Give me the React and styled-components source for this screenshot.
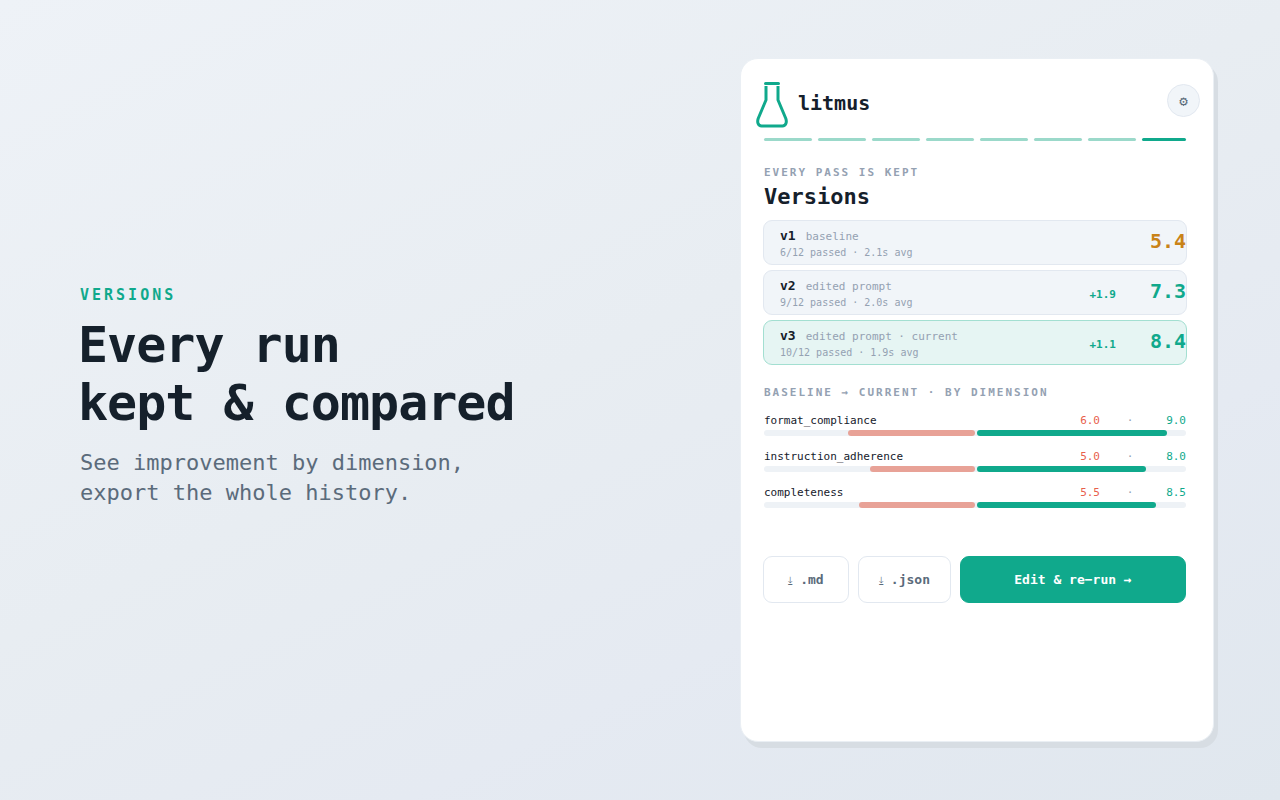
import React from "react";
import styled, { createGlobalStyle } from "styled-components";

const c = {
  ink: "#15202b",
  slate: "#5b6b7b",
  muted: "#94a1b2",
  green: "#10a98c",
  amber: "#c98318",
  red: "#e8604c",
  line: "#e2e8f0",
  panel: "#f1f5f9",
};

const GlobalStyle = createGlobalStyle`
  * { box-sizing: border-box; }
  body {
    margin: 0;
    font-family: "DejaVu Sans Mono", monospace;
    color: ${c.ink};
  }
  h1, h2, h3, p, ul { margin: 0; padding: 0; }
  ul { list-style: none; }
  button { font-family: inherit; cursor: pointer; }
`;

const Page = styled.main`
  min-height: 100vh;
  display: flex;
  align-items: stretch;
  justify-content: space-between;
  padding: 58px 66px 58px 80px;
  background: linear-gradient(154deg, #eef2f7, #e8edf2 45%, #e5eaf2 70%, #e0e7ee);
`;

const Intro = styled.section`
  align-self: center;
  padding-bottom: 6px;
`;

const Kicker = styled.p`
  font-size: 15px;
  line-height: 18px;
  font-weight: 700;
  letter-spacing: 3px;
  color: ${c.green};
`;

const Headline = styled.h1`
  margin: 12px 0 0 -2px;
  font-size: 50px;
  line-height: 58px;
  letter-spacing: -1px;
`;

const Lead = styled.p`
  margin-top: 16px;
  font-size: 22px;
  line-height: 30px;
  color: ${c.slate};
`;

const Card = styled.section`
  width: 474px;
  padding: 22px 27px 23px 23px;
  border: 1px solid #eaeff4;
  border-radius: 18px;
  background: #fff;
  box-shadow: 4px 6px 0 #d7dde3;
`;

const CardHeader = styled.header`
  display: flex;
  align-items: flex-start;
  height: 48px;
  margin: 0 -14px 0 -8px;
`;

const Flask = styled.svg`
  display: block;
  width: 32px;
  height: 48px;
`;

const Brand = styled.span`
  margin: 10px 0 0 10px;
  font-size: 20px;
  line-height: 24px;
  font-weight: 700;
`;

const IconButton = styled.button`
  width: 33px;
  height: 33px;
  margin: 3px 0 0 auto;
  padding: 2px 0 0;
  border: 1px solid ${c.line};
  border-radius: 50%;
  background: ${c.panel};
  font-size: 14px;
  line-height: 29px;
  color: ${c.slate};
`;

const Steps = styled.div`
  display: flex;
  gap: 6px;
  margin-top: 9px;
`;

const Step = styled.span`
  flex: ${(p) => (p.$current ? "11" : "12")} 1 0;
  height: 3px;
  border-radius: 2px;
  background: ${(p) => (p.$current ? c.green : "#9bd9ca")};
`;

const Overline = styled.p`
  margin-top: ${(p) => p.$top};
  font-size: 11px;
  line-height: 14px;
  font-weight: 700;
  letter-spacing: 2px;
  color: ${c.muted};
`;

const Title = styled.h2`
  margin-top: 3px;
  font-size: 22px;
  line-height: 28px;
`;

const VersionList = styled.ul`
  display: grid;
  gap: 5px;
  margin: 9px -1px 0;
`;

const Version = styled.li`
  display: flex;
  height: 45px;
  padding: 6px 0 0 16px;
  border: 1px solid ${(p) => (p.$current ? "#a3dfd1" : c.line)};
  border-radius: 9px;
  background: ${(p) => (p.$current ? "#e6f5f3" : c.panel)};
`;

const VersionText = styled.div`
  flex: 1;
`;

const VersionName = styled.div`
  display: flex;
  align-items: baseline;
  gap: 10px;
  font-size: 11px;
  line-height: 18px;
  color: ${c.muted};

  strong {
    font-size: 13px;
    color: ${c.ink};
  }
`;

const VersionMeta = styled.div`
  font-size: 10px;
  line-height: 14px;
  color: ${c.muted};
`;

const Delta = styled.span`
  padding-top: 11px;
  font-size: 11px;
  line-height: 14px;
  font-weight: 700;
  color: ${c.green};
`;

const Score = styled.span`
  width: 70px;
  text-align: right;
  font-size: 20px;
  line-height: 28px;
  font-weight: 700;
  color: ${(p) => (p.$low ? c.amber : c.green)};
`;

const Dimensions = styled.ul`
  display: grid;
  gap: 14px;
  margin-top: 14px;
`;

const DimensionRow = styled.div`
  display: grid;
  grid-template-columns: 1fr 20px 60px 26px;
  font-size: 11px;
  line-height: 14px;
  margin-bottom: 2px;
`;

const Value = styled.span`
  text-align: ${(p) => p.$align || "right"};
  color: ${(p) => p.$color};
`;

const Track = styled.div`
  display: grid;
  grid-template-columns: 1fr 1fr;
  height: 6px;
  border-radius: 3px;
  background: #eef2f6;
`;

const Fill = styled.span`
  justify-self: ${(p) => (p.$before ? "end" : "start")};
  margin-left: ${(p) => (p.$before ? "0" : "2px")};
  border-radius: 3px;
  background: ${(p) => (p.$before ? "#e8a297" : c.green)};
`;

const Actions = styled.div`
  display: flex;
  gap: 9px;
  margin: 48px 0 0 -1px;
`;

const Button = styled.button`
  flex: ${(p) => (p.$primary ? "1" : "none")};
  width: ${(p) => p.$width || "auto"};
  height: 47px;
  padding: 0;
  border: 1px solid ${(p) => (p.$primary ? c.green : c.line)};
  border-radius: 9px;
  background: ${(p) => (p.$primary ? c.green : "#fff")};
  font-size: 13px;
  font-weight: 700;
  color: ${(p) => (p.$primary ? "#fff" : c.slate)};
`;

const DownloadGlyph = styled.span`
  font-size: 10px;
  font-weight: 400;
`;

const versions = [
  { id: "v1", note: "baseline", meta: "6/12 passed · 2.1s avg", score: "5.4", low: true },
  { id: "v2", note: "edited prompt", meta: "9/12 passed · 2.0s avg", delta: "+1.9", score: "7.3" },
  { id: "v3", note: "edited prompt · current", meta: "10/12 passed · 1.9s avg", delta: "+1.1", score: "8.4", current: true },
];

const dimensions = [
  { name: "format_compliance", before: 6.0, after: 9.0 },
  { name: "instruction_adherence", before: 5.0, after: 8.0 },
  { name: "completeness", before: 5.5, after: 8.5 },
];

export default function App() {
  return (
    <Page>
      <GlobalStyle />
      <Intro>
        <Kicker>VERSIONS</Kicker>
        <Headline>
          Every run
          <br />
          kept &amp; compared
        </Headline>
        <Lead>
          See improvement by dimension,
          <br />
          export the whole history.
        </Lead>
      </Intro>

      <Card>
        <CardHeader>
          <Flask viewBox="0 0 32 48" fill="none" stroke={c.green} strokeWidth="3" aria-hidden="true">
            <path d="M9.5 2.5h13" strokeLinecap="round" />
            <path d="M10 5v14L2.2 37.5C1 41 2 45 5.500 45h21c3.500 0 4.500-4 3.300-7.500L22 19V5" strokeLinejoin="round" />
          </Flask>
          <Brand>litmus</Brand>
          <IconButton aria-label="Settings">⚙</IconButton>
        </CardHeader>

        <Steps>
          {Array.from({ length: 8 }, (_, i) => (
            <Step key={i} $current={i === 7} />
          ))}
        </Steps>

        <Overline $top="25px">EVERY PASS IS KEPT</Overline>
        <Title>Versions</Title>

        <VersionList>
          {versions.map((v) => (
            <Version key={v.id} $current={v.current}>
              <VersionText>
                <VersionName>
                  <strong>{v.id}</strong>
                  <span>{v.note}</span>
                </VersionName>
                <VersionMeta>{v.meta}</VersionMeta>
              </VersionText>
              {v.delta && <Delta>{v.delta}</Delta>}
              <Score $low={v.low}>{v.score}</Score>
            </Version>
          ))}
        </VersionList>

        <Overline $top="21px">BASELINE → CURRENT · BY DIMENSION</Overline>
        <Dimensions>
          {dimensions.map((d) => (
            <li key={d.name}>
              <DimensionRow>
                <span>{d.name}</span>
                <Value $color={c.red}>{d.before.toFixed(1)}</Value>
                <Value $color={c.muted} $align="center">·</Value>
                <Value $color={c.green}>{d.after.toFixed(1)}</Value>
              </DimensionRow>
              <Track>
                <Fill $before style={{ width: `${d.before * 10}%` }} />
                <Fill style={{ width: `${d.after * 10}%` }} />
              </Track>
            </li>
          ))}
        </Dimensions>

        <Actions>
          <Button $width="86px"><DownloadGlyph>⤓</DownloadGlyph> .md</Button>
          <Button $width="93px"><DownloadGlyph>⤓</DownloadGlyph> .json</Button>
          <Button $primary>Edit &amp; re−run →</Button>
        </Actions>
      </Card>
    </Page>
  );
}
